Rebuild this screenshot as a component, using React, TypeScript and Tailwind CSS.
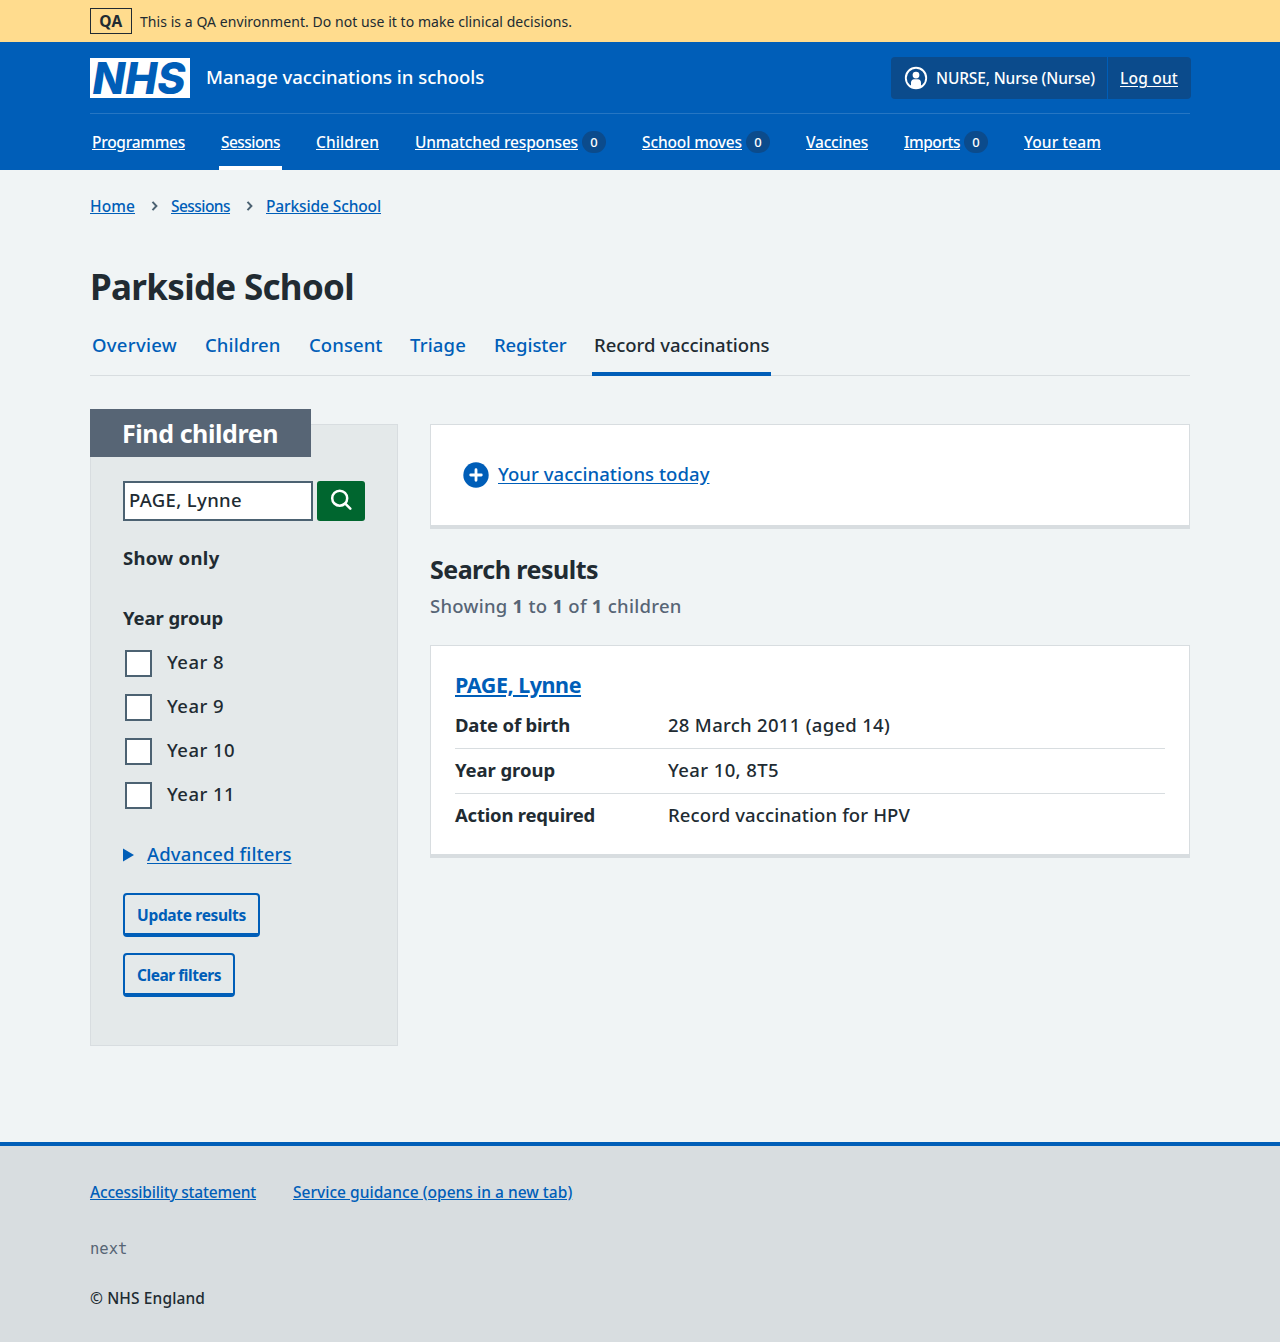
import React from 'react';

type Link = { label: string; cls: string; count?: number; current?: boolean };

const NAV: Link[] = [
  { label: 'Programmes', cls: 'w-[93px] tracking-[-0.268px]' },
  { label: 'Sessions', cls: 'w-[59px] tracking-[-0.549px]', current: true },
  { label: 'Children', cls: 'w-[63px] tracking-[0.075px]' },
  { label: 'Unmatched responses', cls: 'w-[163px] tracking-[-0.155px]', count: 0 },
  { label: 'School moves', cls: 'w-[100px] tracking-[-0.121px]', count: 0 },
  { label: 'Vaccines', cls: 'w-[62px] tracking-[-0.205px]' },
  { label: 'Imports', cls: 'w-[56px] tracking-[-0.467px]', count: 0 },
  { label: 'Your team', cls: 'w-[77px] tracking-[0.063px]' },
];

const TABS: Link[] = [
  { label: 'Overview', cls: 'w-[85px] tracking-[0.297px]' },
  { label: 'Children', cls: 'w-[76px] tracking-[0.127px]' },
  { label: 'Consent', cls: 'w-[73px] tracking-[0.079px]' },
  { label: 'Triage', cls: 'w-[56px] tracking-[0.173px]' },
  { label: 'Register', cls: 'w-[72px] tracking-[-0.1px]' },
  { label: 'Record vaccinations', cls: 'w-[175px] tracking-[-0.031px]', current: true },
];

const YEARS = ['Year 8', 'Year 9', 'Year 10', 'Year 11'];

const ROWS = [
  { key: 'Date of birth', keyCls: 'tracking-[-0.199px]', value: '28 March 2011 (aged 14)', valueCls: 'tracking-[0.292px]' },
  { key: 'Year group', keyCls: 'tracking-[-0.073px]', value: 'Year 10, 8T5', valueCls: 'tracking-[0.392px]' },
  { key: 'Action required', keyCls: 'tracking-[-0.209px]', value: 'Record vaccination for HPV', valueCls: 'tracking-[0.117px]' },
];

function Logo() {
  return (
    <svg width="100" height="40" viewBox="0 0 100 40" className="shrink-0 overflow-visible" role="img" aria-label="NHS">
      <rect width="100" height="40" fill="#fff" />
      <text
        x="2.5"
        y="36.2"
        textLength="93"
        lengthAdjust="spacingAndGlyphs"
        fontFamily="Inter, 'Open Sans', sans-serif"
        fontWeight="800"
        fontStyle="italic"
        fontSize="44.5"
        fill="#005eb8"
      >
        NHS
      </text>
    </svg>
  );
}

function UserIcon() {
  return (
    <svg width="24" height="24" viewBox="0 0 24 24" fill="none" className="shrink-0">
      <clipPath id="user-clip">
        <circle cx="12" cy="12" r="10.5" />
      </clipPath>
      <circle cx="12" cy="12" r="10.2" stroke="#fff" strokeWidth="1.9" />
      <circle cx="12" cy="9.1" r="3.4" fill="#fff" />
      <path d="M7 24v-7.500c0-1.900 1.300-3.200 3-3.200h4c1.700 0 3 1.300 3 3.200V24z" fill="#fff" clipPath="url(#user-clip)" />
    </svg>
  );
}

function Chevron() {
  return (
    <svg width="8" height="12" viewBox="0 0 8 12" fill="none" stroke="#4c6272" strokeWidth="2">
      <path d="M1.500 1.900 5.400 6 1.500 10.100" />
    </svg>
  );
}

export default function App() {
  return (
    <div className="flex h-[1342px] w-[1280px] flex-col bg-[#f0f4f5] font-['Noto_Sans',sans-serif] text-[18.5px] font-medium whitespace-nowrap text-[#212b32]">
      <div className="h-[42px] bg-[#ffdc8e] px-[90px]">
        <div className="flex h-[42px] items-center gap-2">
          <strong className="flex h-[26px] w-[42px] items-center justify-center border border-[#212b32] text-[15.5px] leading-6 font-bold tracking-[0.5px]">QA</strong>
          <span className="pt-px text-sm font-normal tracking-[0.055px]">This is a QA environment. Do not use it to make clinical decisions.</span>
        </div>
      </div>

      <header className="h-32 bg-[#005eb8] px-[90px] text-white">
        <div className="flex h-[71px] items-center">
          <Logo />
          <span className="ml-4 pb-[2px] tracking-[-0.015px]">Manage vaccinations in schools</span>
          <div className="-mr-px ml-auto flex h-[42px] w-[300px] overflow-hidden rounded-[4px] bg-[#0b4b8c] text-[15.5px]">
            <div className="flex w-[217px] items-center border-r border-[#005eb8] pl-[13px]">
              <UserIcon />
              <span className="ml-2 pt-[2px] tracking-[-0.143px]">NURSE, Nurse (Nurse)</span>
            </div>
            <a className="flex items-center pt-[2px] pl-3 tracking-[0.212px] underline underline-offset-2">Log out</a>
          </div>
        </div>
        <nav className="flex h-[57px] gap-8 border-t border-[#2676c3] text-[15.5px]">
          {NAV.map((n) => (
            <div
              key={n.label}
              className={`flex items-center gap-1 border-b-4 px-[2px] pt-1 ${n.current ? 'border-white' : 'border-transparent'}`}
            >
              <a className={`pt-[2px] underline underline-offset-1 ${n.cls}`}>{n.label}</a>
              {n.count !== undefined && (
                <span className="flex h-[22px] w-6 items-center justify-center rounded-full bg-[#0b4b8c] pt-[2px] text-[13px]">{n.count}</span>
              )}
            </div>
          ))}
        </nav>
      </header>

      <main className="flex-1 px-[90px]">
        <nav className="flex h-[72px] items-center text-[15.5px] text-[#005eb8]">
          <a className="w-[45px] pt-[2px] tracking-[0.09px] underline underline-offset-1">Home</a>
          <span className="flex w-9 justify-center pl-[3px]"><Chevron /></span>
          <a className="w-[59px] pt-[2px] tracking-[-0.549px] underline underline-offset-1">Sessions</a>
          <span className="flex w-9 justify-center pl-[3px]"><Chevron /></span>
          <a className="pt-[2px] tracking-[-0.118px] underline underline-offset-1">Parkside School</a>
        </nav>

        <h1 className="mt-[21px] h-[47px] text-[35px] leading-[48px] font-bold tracking-[-0.698px]">Parkside School</h1>

        <nav className="mt-[6px] flex h-[60px] gap-6 border-b border-[#d8dde0]">
          {TABS.map((t) => (
            <a
              key={t.label}
              className={`-mb-px flex items-center border-b-4 px-[2px] pt-px ${t.current ? 'border-[#005eb8] text-[#212b32]' : 'border-transparent text-[#005eb8]'}`}
            >
              <span className={t.cls}>{t.label}</span>
            </a>
          ))}
        </nav>

        <div className="mt-12 flex items-start gap-8">
          <aside className="h-[622px] w-[308px] border border-[#d8dde0] bg-[#e4e9ea] px-8">
            <h2 className="-mt-4 -ml-[33px] flex h-12 w-[221px] items-center bg-[#576575] pt-px pl-8 text-[25px] font-bold tracking-[-0.421px] text-white">Find children</h2>
            <div className="mt-6 flex gap-1">
              <input
                readOnly
                value="PAGE, Lynne"
                className="h-10 w-[190px] border-2 border-[#4c6272] bg-white px-1 pb-[3px] tracking-[0.347px] outline-none"
              />
              <button className="flex h-10 w-12 justify-center rounded-[3px] bg-[#00662f] pt-[7px]" aria-label="Search">
                <svg width="24" height="24" viewBox="0 0 24 24" fill="none" stroke="#fff" strokeWidth="2.5" strokeLinecap="round">
                  <circle cx="10.700" cy="10.200" r="7.500" />
                  <path d="m16.300 15.700 5 5" />
                </svg>
              </button>
            </div>
            <h3 className="mt-[23px] leading-7 font-bold tracking-[0.309px]">Show only</h3>
            <h3 className="mt-8 leading-7 font-bold tracking-[-0.073px]">Year group</h3>
            <div className="mt-[9px] pl-[2px]">
              {YEARS.map((y) => (
                <label key={y} className="flex h-11 items-center gap-[15px] tracking-[0.448px]">
                  <span className="size-[27px] border-2 border-[#4c6272] bg-white" />
                  <span className="-mt-[3px]">{y}</span>
                </label>
              ))}
            </div>
            <div className="mt-6 flex h-7 items-center gap-[13px] text-[#005eb8]">
              <svg width="11" height="14" viewBox="0 0 11 14">
                <path d="M0 .5 11 7 0 13.500z" fill="#005eb8" />
              </svg>
              <a className="-mt-[3px] tracking-[0.119px] underline underline-offset-2">Advanced filters</a>
            </div>
            <button className="mt-6 flex h-11 w-[137px] items-center rounded-[4px] border-2 border-b-4 border-[#005eb8] pt-[3px] pl-3 text-[15.5px] font-bold tracking-[-0.319px] text-[#005eb8]">Update results</button>
            <button className="mt-4 flex h-11 w-[112px] items-center rounded-[4px] border-2 border-b-4 border-[#005eb8] pt-[3px] pl-3 text-[15.5px] font-bold tracking-[-0.461px] text-[#005eb8]">Clear filters</button>
          </aside>

          <section className="w-[760px]">
            <div className="flex h-[105px] items-center border border-b-4 border-[#d8dde0] bg-white pl-8">
              <svg width="26" height="26" viewBox="0 0 26 26">
                <circle cx="13" cy="13" r="12.700" fill="#005eb8" />
                <path d="M13 7.700v10.600M7.700 13h10.600" stroke="#fff" strokeWidth="2.800" strokeLinecap="round" />
              </svg>
              <a className="-mt-[3px] ml-[9px] tracking-[0.061px] text-[#005eb8] underline underline-offset-2">Your vaccinations today</a>
            </div>
            <h2 className="mt-[24px] text-[25px] leading-8 font-bold tracking-[-0.518px]">Search results</h2>
            <p className="mt-[7px] leading-7 tracking-[0.255px] text-[#576575]">
              Showing <b>1</b> to <b>1</b> of <b>1</b> children
            </p>
            <div className="mt-[25px] h-[213px] border border-b-4 border-[#d8dde0] bg-white px-6 pt-6">
              <a className="block h-[30px] text-[21.5px] leading-[30px] font-bold tracking-[-0.466px] text-[#005eb8] underline underline-offset-2">PAGE, Lynne</a>
              <dl className="mt-[4px]">
                {ROWS.map((r) => (
                  <div key={r.key} className="flex h-[45px] items-center border-b border-[#d8dde0] pb-[2px] last:border-transparent">
                    <dt className={`w-[213px] font-bold ${r.keyCls}`}>{r.key}</dt>
                    <dd className={r.valueCls}>{r.value}</dd>
                  </div>
                ))}
              </dl>
            </div>
          </section>
        </div>
      </main>

      <footer className="h-[200px] border-t-4 border-[#005eb8] bg-[#d8dde0] px-[90px] pt-[34px] text-[15.5px] leading-6">
        <div className="flex gap-[37px] text-[#005eb8]">
          <a className="w-[166px] tracking-[-0.184px] underline underline-offset-1">Accessibility statement</a>
          <a className="tracking-[0.03px] underline underline-offset-1">Service guidance (opens in a new tab)</a>
        </div>
        <p className="mt-[33px] font-['DejaVu_Sans_Mono',monospace] text-[15.500px] font-normal text-[#576575]">next</p>
        <p className="mt-[25px] tracking-[0.12px]">© NHS England</p>
      </footer>
    </div>
  );
}
